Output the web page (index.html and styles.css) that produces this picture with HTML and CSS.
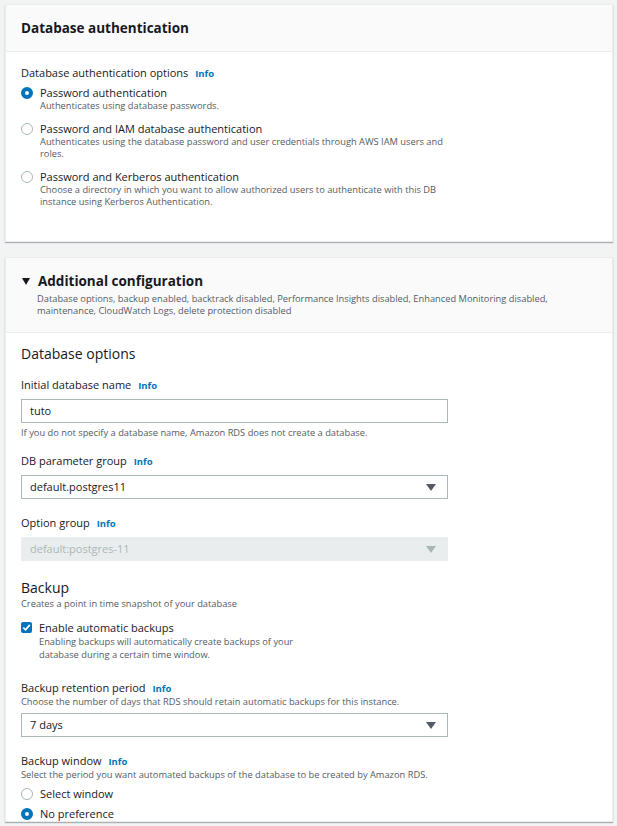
FILE: index.html
```html
<!DOCTYPE html>
<html>
<head>
<meta charset="utf-8">
<link rel="stylesheet" href="styles.css">
</head>
<body>
<div class="page">
  <section class="card card-auth">
    <div class="card-header">
      <h2 class="card-title">Database authentication</h2>
    </div>
    <div class="card-body">
      <div class="label">Database authentication options <span class="info">Info</span></div>
      <div class="radio-group">
        <div class="option">
          <span class="radio checked"></span>
          <div class="option-text">
            <div class="option-title">Password authentication</div>
            <div class="desc">Authenticates using database passwords.</div>
          </div>
        </div>
        <div class="option">
          <span class="radio"></span>
          <div class="option-text">
            <div class="option-title">Password and IAM database authentication</div>
            <div class="desc">Authenticates using the database password and user credentials through AWS IAM users and roles.</div>
          </div>
        </div>
        <div class="option">
          <span class="radio"></span>
          <div class="option-text">
            <div class="option-title">Password and Kerberos authentication</div>
            <div class="desc">Choose a directory in which you want to allow authorized users to authenticate with this DB instance using Kerberos Authentication.</div>
          </div>
        </div>
      </div>
    </div>
  </section>

  <section class="card card-additional">
    <div class="card-header header-expand">
      <h2 class="card-title"><span class="caret"><svg width="8" height="7" viewBox="0 0 8 7"><path d="M0 0 L8 0 L4 7 Z" fill="#16191f"/></svg></span>Additional configuration</h2>
      <div class="header-desc">Database options, backup enabled, backtrack disabled, Performance Insights disabled, Enhanced Monitoring disabled, maintenance, CloudWatch Logs, delete protection disabled</div>
    </div>
    <div class="card-body body-additional">
      <h3 class="section-title">Database options</h3>

      <div class="field">
        <div class="label">Initial database name <span class="info">Info</span></div>
        <div class="input">tuto</div>
        <div class="hint">If you do not specify a database name, Amazon RDS does not create a database.</div>
      </div>

      <div class="field">
        <div class="label">DB parameter group <span class="info">Info</span></div>
        <div class="input select">default.postgres11<span class="arrow"></span></div>
      </div>

      <div class="field field-option">
        <div class="label">Option group <span class="info">Info</span></div>
        <div class="input select disabled">default:postgres-11<span class="arrow"></span></div>
      </div>

      <h3 class="section-title backup-title">Backup</h3>
      <div class="desc section-desc">Creates a point in time snapshot of your database</div>

      <div class="option check-option">
        <span class="checkbox"><svg width="9" height="9" viewBox="0 0 9 9"><path d="M1.3 4.6 L3.6 6.8 L7.8 1.8" fill="none" stroke="#fff" stroke-width="1.8"/></svg></span>
        <div class="option-text">
          <div class="option-title">Enable automatic backups</div>
          <div class="desc narrow">Enabling backups will automatically create backups of your database during a certain time window.</div>
        </div>
      </div>

      <div class="field field-retention">
        <div class="label">Backup retention period <span class="info">Info</span></div>
        <div class="desc label-desc">Choose the number of days that RDS should retain automatic backups for this instance.</div>
        <div class="input select">7 days<span class="arrow"></span></div>
      </div>

      <div class="field field-window">
        <div class="label">Backup window <span class="info">Info</span></div>
        <div class="desc label-desc">Select the period you want automated backups of the database to be created by Amazon RDS.</div>
        <div class="simple-radios">
          <div class="option simple"><span class="radio"></span><div class="option-title">Select window</div></div>
          <div class="option simple"><span class="radio checked"></span><div class="option-title">No preference</div></div>
        </div>
      </div>
    </div>
  </section>
</div>
</body>
</html>
```

FILE: styles.css
```css
* { box-sizing: border-box; }
html, body { margin: 0; padding: 0; }
body {
  background: #f2f3f3;
  font-family: "Open Sans", "Liberation Sans", sans-serif;
  color: #16191f;
  height: 826px;
  overflow: hidden;
}
.page {
  padding: 4px 4px 0 5px;
  display: flex;
  flex-direction: column;
  gap: 15px;
}
.card {
  background: #fff;
  border: 1px solid #eaeded;
  box-shadow: 0 1px 1px 0 rgba(0, 28, 36, 0.3);
}
.card-header {
  background: #fafafa;
  border-bottom: 1px solid #eaeded;
  padding: 0 15px;
  height: 47px;
  display: flex;
  align-items: center;
}
.card-title {
  margin: 0;
  font-size: 13.5px;
  font-weight: 700;
  color: #16191f;
  line-height: 18px;
  display: flex;
  align-items: center;
}
.card-body {
  padding: 13px 15px 0;
}
.card-auth .card-body { height: 189px; }
.label {
  font-size: 11px;
  line-height: 15px;
  color: #16191f;
}
.info {
  color: #0073bb;
  font-weight: 700;
  font-size: 9.5px;
  margin-left: 4px;
}
.radio-group {
  margin-top: 4px;
  display: flex;
  flex-direction: column;
  gap: 9px;
}
.option {
  display: flex;
  align-items: flex-start;
  gap: 7px;
}
.option-text { display: flex; flex-direction: column; }
.option-title {
  font-size: 11px;
  line-height: 15px;
  color: #16191f;
}
.desc {
  font-size: 9.3px;
  line-height: 12px;
  color: #545b64;
  max-width: 410px;
}
.desc.narrow { max-width: 265px; line-height: 13px; }
.radio {
  flex: none;
  width: 12px;
  height: 12px;
  border-radius: 50%;
  border: 1px solid #aab7b8;
  background: #fff;
  margin-top: 2px;
}
.radio.checked {
  border: 4px solid #0073bb;
}
.header-expand {
  height: 75px;
  flex-direction: column;
  align-items: flex-start;
  justify-content: flex-start;
  padding-top: 14px;
}
.caret {
  display: flex;
  margin-right: 8px;
  margin-left: 1px;
}
.header-desc {
  margin-top: 3px;
  padding-left: 16px;
  font-size: 9.3px;
  line-height: 12px;
  color: #545b64;
  max-width: 560px;
}
.body-additional { padding-top: 12px; }
.section-title {
  margin: 0;
  font-size: 14px;
  font-weight: 400;
  line-height: 18px;
  color: #16191f;
}
.field { margin-top: 14px; }
.field .label { margin-bottom: 6px; }
.input {
  width: 427px;
  height: 24px;
  border: 1px solid #aab7b8;
  padding: 0 8px;
  font-size: 11px;
  line-height: 22px;
  color: #16191f;
  position: relative;
}
.hint {
  margin-top: 4px;
  font-size: 9.3px;
  line-height: 12px;
  color: #545b64;
}
.select .arrow {
  position: absolute;
  right: 11px;
  top: 8px;
  width: 0;
  height: 0;
  border-left: 5px solid transparent;
  border-right: 5px solid transparent;
  border-top: 7px solid #545b64;
}
.select.disabled {
  background: #eaeded;
  border-color: #eaeded;
  color: #aab7b8;
}
.select.disabled .arrow { border-top-color: #aab7b8; }
.field-option { margin-top: 16px; }
.backup-title { margin-top: 18px; }
.section-desc { margin-top: 1px; }
.check-option { margin-top: 10px; }
.checkbox {
  flex: none;
  width: 11px;
  height: 11px;
  border-radius: 2px;
  background: #0073bb;
  margin-top: 2px;
  display: flex;
  align-items: center;
  justify-content: center;
}
.field-retention { margin-top: 19px; }
.field .label-desc { margin-top: 0; max-width: none; }
.field-retention .label { margin-bottom: 0; }
.field-retention .input { margin-top: 5px; }
.field-window { margin-top: 16px; }
.field-window .label { margin-bottom: 0; }
.simple-radios {
  margin-top: 5px;
  display: flex;
  flex-direction: column;
  gap: 5px;
}
```
